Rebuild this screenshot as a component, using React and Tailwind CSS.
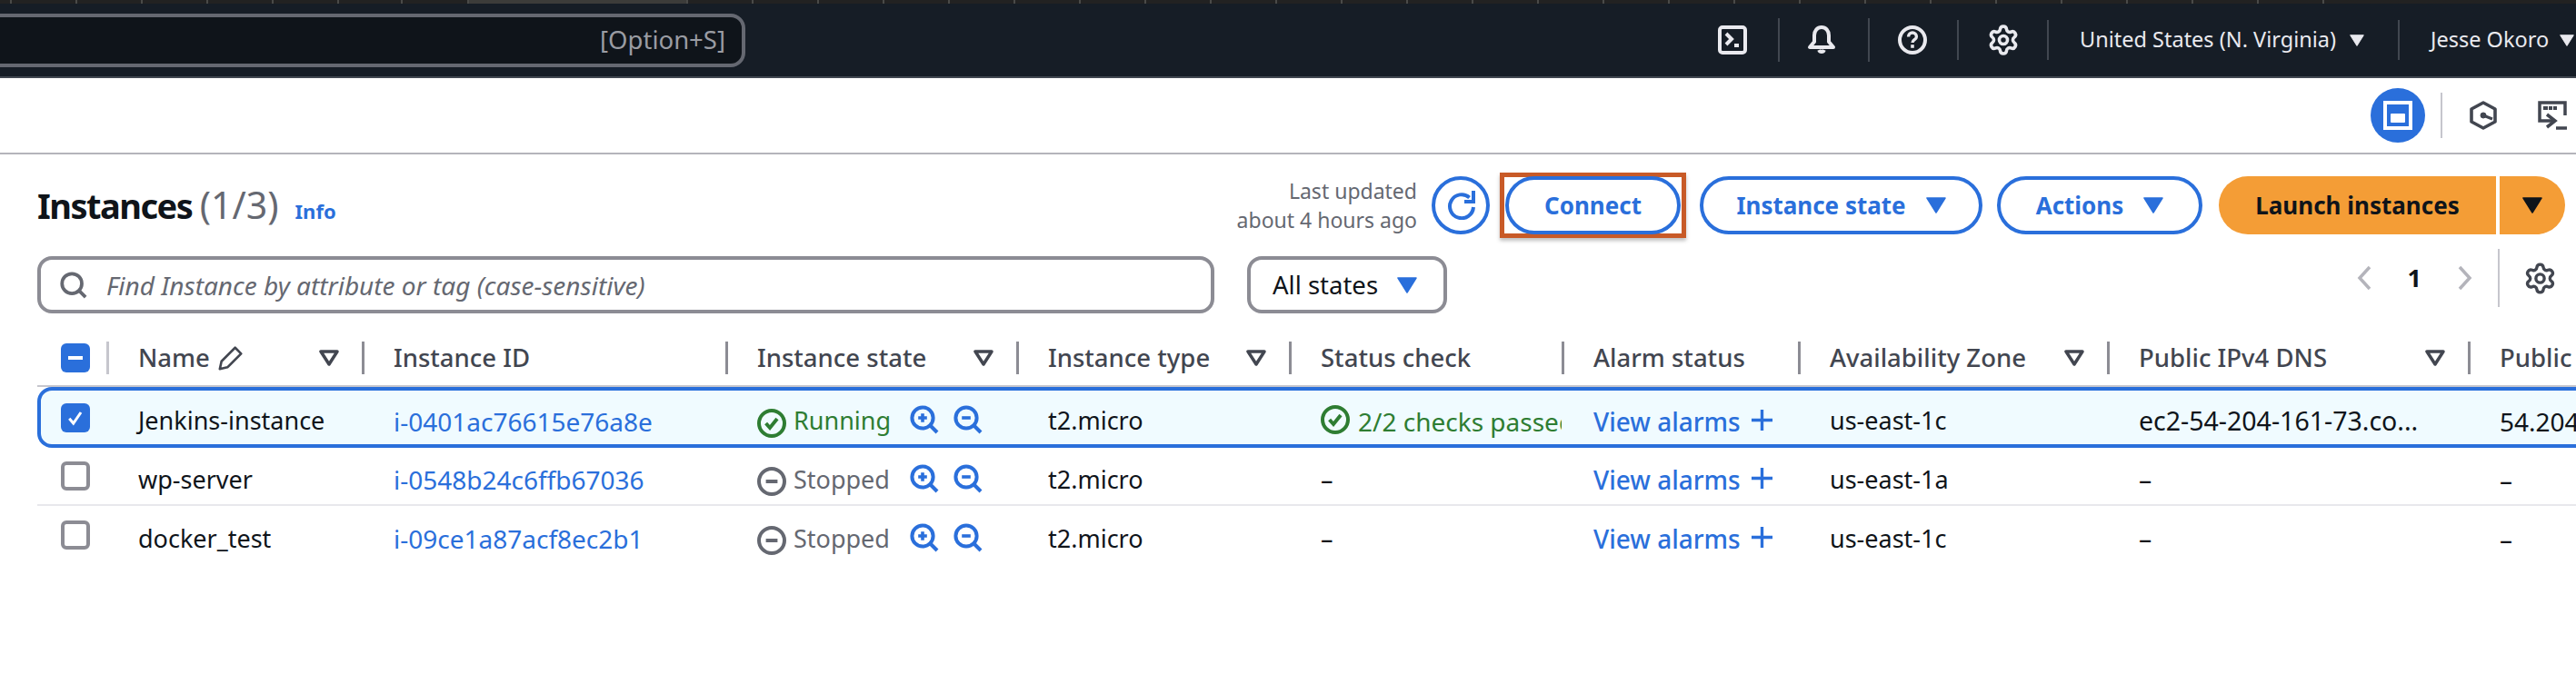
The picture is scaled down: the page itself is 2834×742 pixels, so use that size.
import { Settings } from 'lucide-react';

const blue = '#2a6fdb';

const columns = [
  { width: 'w-[76px]' },
  { width: 'w-[281px]', label: 'Name', sort: true, pencil: true },
  { width: 'w-[400px]', label: 'Instance ID' },
  { width: 'w-[320px]', label: 'Instance state', sort: true },
  { width: 'w-[300px]', label: 'Instance type', sort: true },
  { width: 'w-[300px]', label: 'Status check' },
  { width: 'w-[260px]', label: 'Alarm status' },
  { width: 'w-[340px]', label: 'Availability Zone', sort: true },
  { width: 'w-[397px]', label: 'Public IPv4 DNS', sort: true },
  { width: 'w-[200px]', label: 'Public IPv4 address' },
];

const rows = [
  {
    name: 'Jenkins-instance',
    id: 'i-0401ac76615e76a8e',
    running: true,
    checked: true,
    zone: 'us-east-1c',
    dns: 'ec2-54-204-161-73.co...',
    ip: '54.204.161.73',
  },
  { name: 'wp-server', id: 'i-0548b24c6ffb67036', zone: 'us-east-1a', dns: '–', ip: '–' },
  { name: 'docker_test', id: 'i-09ce1a87acf8ec2b1', zone: 'us-east-1c', dns: '–', ip: '–' },
];

const ticks = [13, 72, 72, 72, 72, 72, 70, 73, 241, 72, 72, 72, 72, 72, 72, 72, 72, 72, 72, 72, 72, 72, 72, 72, 72, 72, 72, 72, 72, 72, 72, 72, 72, 72];

const Glyph = ({ size = 32, color = 'currentColor', width = 2, children, className = '' }) => (
  <svg
    viewBox="0 0 16 16"
    width={size}
    height={size}
    fill="none"
    stroke={color}
    strokeWidth={width}
    className={`shrink-0 ${className}`}
  >
    {children}
  </svg>
);

const Caret = ({ color, width = 22, height = 18, className = '' }) => (
  <svg viewBox="0 0 22 18" width={width} height={height} className={`shrink-0 ${className}`}>
    <path d="M1 1h20L11 17z" fill={color} stroke={color} strokeWidth="1.5" strokeLinejoin="round" />
  </svg>
);

const SortCaret = () => (
  <svg viewBox="0 0 22 18" width="22" height="18" className="shrink-0">
    <path d="M2 2h18L11 16z" fill="none" stroke="#424650" strokeWidth="3.5" strokeLinejoin="round" />
  </svg>
);

const ZoomIcon = ({ plus }) => (
  <Glyph color={blue} className="mt-[-3px]">
    <circle cx="7" cy="7" r="5.8" />
    <path d="m11 11 4 4" />
    <path d={plus ? 'M4.6 7h4.8M7 4.6v4.8' : 'M4.6 7h4.8'} strokeWidth="1.8" />
  </Glyph>
);

const Separator = ({ className }) => <div className={`w-[2px] shrink-0 bg-[#414750] ${className}`} />;

const OutlineButton = ({ children, className }) => (
  <button className={`h-[64px] shrink-0 rounded-[32px] border-[4px] border-[#2a6fdb] bg-white flex items-center justify-center gap-[22px] text-[26px] font-bold text-[#2a6fdb] ${className}`}>
    {children}
  </button>
);

const TopBar = () => (
  <header>
    <div className="flex h-[4px] bg-[#222222]">
      {ticks.map((w, i) => (
        <div
          key={i}
          style={{ width: w }}
          className={`shrink-0 border-r-2 border-[#4a4a48] ${i === 8 ? 'bg-[#3c3c3a]' : ''}`}
        />
      ))}
    </div>
    <div className="flex h-[82px] items-center border-b-2 border-[#414750] bg-[#161d26] text-[#e9e9ee]">
      <div className="ml-[-20px] flex h-[59px] w-[840px] items-center justify-end rounded-[16px] border-[4px] border-[#656871] bg-[#0f141a] pr-[18px] text-[27.5px] text-[#9a9ca3]">
        [Option+S]
      </div>
      <div className="ml-auto flex items-center">
        <Glyph>
          <rect x="1" y="1" width="14" height="14" rx="1.5" />
          <path d="m4.5 4.500 3 3-3 3M9 11h2.500" />
        </Glyph>
        <Separator className="ml-[34px] h-[48px]" />
        <Glyph className="ml-[30px]">
          <path d="M8 1C5.600 1 4 3 4 5.500V9l-2.500 3h13L12 9V5.500C12 3 10.400 1 8 1z" strokeLinejoin="round" />
          <path d="M6.600 13.500a1.500 1.500 0 0 0 2.800 0" />
        </Glyph>
        <Separator className="ml-[35px] h-[48px]" />
        <Glyph className="ml-[31px]">
          <circle cx="8" cy="8" r="7" />
          <path d="M5.800 6.200C5.800 5 6.800 4 8 4s2.200 1 2.200 2.200c0 1.700-2.200 1.600-2.200 3.300" strokeWidth="1.700" />
          <path d="M8 10.600v1.800" strokeWidth="1.800" />
        </Glyph>
        <Separator className="ml-[33px] h-[44px]" />
        <Settings size={36} strokeWidth={2.4} className="ml-[31px] shrink-0" />
        <Separator className="ml-[30px] h-[44px]" />
        <span className="ml-[34px] w-[284px] text-[23.5px] whitespace-nowrap">United States (N. Virginia)</span>
        <Caret color="#e9e9ee" width={16} height={13} className="ml-[13px]" />
        <Separator className="ml-[37px] h-[44px]" />
        <span className="ml-[34px] w-[129px] text-[23.5px] whitespace-nowrap">Jesse Okoro</span>
        <Caret color="#e9e9ee" width={16} height={13} className="ml-[13px] mr-[2px]" />
      </div>
    </div>
  </header>
);

const Toolbar = () => (
  <div className="flex h-[84px] items-center justify-end border-b-2 border-[#b4b4bb] pr-[10px]">
    <div className="flex h-[60px] w-[60px] items-center justify-center rounded-full bg-[#2a6fdb]">
      <div className="flex h-[32px] w-[32px] items-end justify-center border-[4px] border-white pb-[4px]">
        <div className="h-[10px] w-[16px] rounded-[1px] bg-white" />
      </div>
    </div>
    <div className="ml-[17px] h-[50px] w-[2px] bg-[#c6c6cd]" />
    <svg viewBox="0 0 30 32" width="30" height="32" className="ml-[30px]" fill="none" stroke="#424650">
      <path d="M15 2 28 9v14l-13 7-13-7V9z" strokeWidth="3.600" strokeLinejoin="round" />
      <path d="m15 16 10 4" strokeWidth="3" />
      <circle cx="15" cy="16" r="3" fill="#424650" strokeWidth="1" />
    </svg>
    <svg viewBox="0 0 32 32" width="32" height="32" className="ml-[45px]" fill="none" stroke="#424650">
      <path d="M18 22H2V2h28v14" strokeWidth="3.500" />
      <path d="M6 8h5M12 8h4M17 8h4" strokeWidth="4" />
      <path d="m10 15 9 7-9 7" strokeWidth="3.500" />
      <path d="M20 30h12" strokeWidth="3.500" />
    </svg>
  </div>
);

const HeaderRow = () => (
  <div className="mt-[24px] flex items-center justify-between pr-[12px]">
    <div className="flex items-baseline">
      <h1 className="text-[38px] font-bold tracking-[-1.5px] text-[#0f141a]">
        Instances <span className="text-[41px] font-normal tracking-normal text-[#656871]">(1/3)</span>
      </h1>
      <span className="ml-[18px] text-[22px] font-bold text-[#2a6fdb]">Info</span>
    </div>
    <div className="flex items-center">
      <div className="text-right text-[23px] leading-[32px] text-[#656871]">
        <p>Last updated</p>
        <p>about 4 hours ago</p>
      </div>
      <button className="ml-[16px] flex h-[64px] w-[64px] items-center justify-center rounded-full border-[4px] border-[#2a6fdb]">
        <Glyph color={blue}>
          <path d="M15 9A6.500 6.500 0 1 1 12.800 3.700" />
          <path d="M15 0v6h-5" />
        </Glyph>
      </button>
      <div className="my-[-4px] ml-[11px] border-[5px] border-[#c85a27] px-[1px] shadow-[0_3px_4px_rgba(0,0,0,0.25)]">
        <OutlineButton className="w-[193px] my-[-1px]">Connect</OutlineButton>
      </div>
      <OutlineButton className="ml-[15px] w-[311px]">
        Instance state
        <Caret color={blue} />
      </OutlineButton>
      <OutlineButton className="ml-[16px] w-[226px]">
        Actions
        <Caret color={blue} />
      </OutlineButton>
      <div className="ml-[18px] flex h-[64px] shrink-0 text-[26px] font-bold text-[#0f141a]">
        <button className="w-[305px] rounded-l-[32px] bg-[#f49d36]">Launch instances</button>
        <button className="ml-[4px] flex w-[72px] items-center justify-center rounded-r-[32px] bg-[#f49d36]">
          <Caret color="#0f141a" />
        </button>
      </div>
    </div>
  </div>
);

const FilterRow = () => (
  <div className="mt-[24px] flex h-[63px] items-center pr-[21px]">
    <div className="flex h-full w-[1295px] items-center rounded-[16px] border-[4px] border-[#8c8c94] pl-[21px]">
      <Glyph color="#656871" size={30}>
        <circle cx="7" cy="7" r="5.800" />
        <path d="m11 11 4 4" />
      </Glyph>
      <span className="ml-[21px] text-[28px] italic text-[#656871]">Find Instance by attribute or tag (case-sensitive)</span>
    </div>
    <div className="ml-[36px] flex h-full w-[220px] items-center justify-between rounded-[16px] border-[4px] border-[#8c8c94] pl-[24px] pr-[29px] text-[27.5px] text-[#0f141a]">
      All states
      <Caret color={blue} />
    </div>
    <div className="mb-[15px] ml-auto flex items-center">
      <svg viewBox="0 0 16 28" width="16" height="28" fill="none" stroke="#b4b4bb" strokeWidth="3.500">
        <path d="M14 2 3 14l11 12" />
      </svg>
      <span className="mx-[40px] text-[27px] font-bold text-[#0f141a]">1</span>
      <svg viewBox="0 0 16 28" width="16" height="28" fill="none" stroke="#b4b4bb" strokeWidth="3.500">
        <path d="m2 2 11 12L2 26" />
      </svg>
      <div className="ml-[28px] h-[64px] w-[2px] bg-[#c6c6cd]" />
      <Settings size={37} strokeWidth={2.2} color="#424650" className="ml-[26px]" />
    </div>
  </div>
);

const TableHead = () => (
  <div className="mt-[31px] flex h-[50px] w-[2900px] items-start border-b-2 border-[#c6c6cd]">
    {columns.map((col, i) => (
      <div key={i} className={`flex h-[36px] shrink-0 items-center ${col.width} ${i === 0 ? 'pl-[26px]' : 'border-l-[3px] border-[#8c8c94] pl-[32px] pr-[25px]'} ${i === 1 ? 'border-[#c6c6cd]' : ''} text-[27.5px] font-medium text-[#424650]`}>
        {i === 0 ? (
          <div className="flex h-[32px] w-[32px] items-center justify-center rounded-[6px] bg-[#2a6fdb]">
            <div className="h-[4px] w-[16px] bg-white" />
          </div>
        ) : (
          <>
            <span className="whitespace-nowrap">{col.label}</span>
            {col.pencil && (
              <Glyph size={30} color="#424650" width={1.400} className="ml-[8px]">
                <path d="M1.500 14.500 2.500 10 10.500 2l3.500 3.500-8 8z" strokeLinejoin="round" />
              </Glyph>
            )}
            {col.sort && <span className="ml-auto"><SortCaret /></span>}
          </>
        )}
      </div>
    ))}
  </div>
);

const Cell = ({ index, children }) => (
  <div className={`flex shrink-0 items-center overflow-hidden whitespace-nowrap ${columns[index].width} ${index === 0 ? 'pl-[26px]' : 'pl-[35px] pt-[8px]'}`}>
    {children}
  </div>
);

const TableRow = ({ row, last }) => (
  <div className={`flex w-[2900px] text-[27px] text-[#0f141a] ${
    row.checked
      ? 'h-[67px] rounded-[16px] bg-[#f0fbff] shadow-[inset_0_0_0_4px_#2a6fdb]'
      : `h-[64px] ${last ? '' : 'border-b-2 border-[#e8e8ec]'}`
  }`}>
    <Cell index={0}>
      {row.checked ? (
        <div className="flex h-[32px] w-[32px] items-center justify-center rounded-[6px] bg-[#2a6fdb]">
          <Glyph size={24} color="white" width={2}>
            <path d="m3.500 8.500 3 3.500 5.500-8" />
          </Glyph>
        </div>
      ) : (
        <div className="h-[32px] w-[32px] rounded-[6px] border-[4px] border-[#8c8c94] bg-white" />
      )}
    </Cell>
    <Cell index={1}>{row.name}</Cell>
    <Cell index={2}><span className="text-[28px] text-[#2a6fdb]">{row.id}</span></Cell>
    <Cell index={3}>
      <Glyph color={row.running ? '#2e7d32' : '#656871'} className="mt-[4px]">
        <circle cx="8" cy="8" r="7" />
        <path d={row.running ? 'm4.800 8 2.200 2.500 4-5' : 'M4.800 8h6.400'} />
      </Glyph>
      <span className={`ml-[8px] w-[128px] ${row.running ? 'text-[#2e7d32]' : 'text-[#656871]'}`}>
        {row.running ? 'Running' : 'Stopped'}
      </span>
      <ZoomIcon plus />
      <span className="ml-[16px] flex"><ZoomIcon /></span>
    </Cell>
    <Cell index={4}>t2.micro</Cell>
    <Cell index={5}>
      {row.running ? (
        <>
          <Glyph color="#2e7d32" className="mt-[-3px]">
            <circle cx="8" cy="8" r="7" />
            <path d="m4.800 8 2.200 2.500 4-5" />
          </Glyph>
          <span className="ml-[9px] text-[28px] text-[#2e7d32]">2/2 checks passed</span>
        </>
      ) : '–'}
    </Cell>
    <Cell index={6}>
      <span className="text-[28px] font-medium text-[#2a6fdb]">View alarms</span>
      <svg viewBox="0 0 26 26" width="25" height="25" className="ml-[11px] mt-[-3px]" fill="none" stroke={blue} strokeWidth="3.500">
        <path d="M1 13h24M13 1v24" />
      </svg>
    </Cell>
    <Cell index={7}>{row.zone}</Cell>
    <Cell index={8}><span className="text-[28.5px]">{row.dns}</span></Cell>
    <Cell index={9}><span className="text-[28px]">{row.ip}</span></Cell>
  </div>
);

const App = () => (
  <div className="h-screen w-full overflow-hidden bg-white [font-family:'Noto_Sans',sans-serif]">
    <TopBar />
    <Toolbar />
    <main className="pl-[41px]">
      <HeaderRow />
      <FilterRow />
      <TableHead />
      {rows.map((row, i) => (
        <TableRow key={row.id} row={row} last={i === rows.length - 1} />
      ))}
    </main>
  </div>
);

export default App;
